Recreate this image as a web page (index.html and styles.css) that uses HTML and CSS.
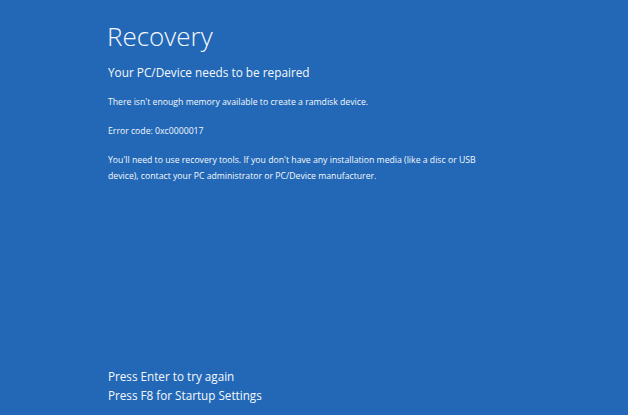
FILE: index.html
```html
<!DOCTYPE html>
<html lang="en">
<head>
    <meta charset="UTF-8">
    <meta name="viewport" content="width=device-width, initial-scale=1.0">
    <title>Recovery</title>
    <link rel="stylesheet" href="styles.css">
</head>
<body>
    <div class="screen">
        <div class="content">
            <h1 class="title">Recovery</h1>
            <h2 class="subtitle">Your PC/Device needs to be repaired</h2>
            <p class="message">There isn't enough memory available to create a ramdisk device.</p>
            <p class="message">Error code: 0xc0000017</p>
            <p class="message">You'll need to use recovery tools. If you don't have any installation media (like a disc or USB<br>device), contact your PC administrator or PC/Device manufacturer.</p>
        </div>
        <div class="actions">
            <p class="action">Press Enter to try again</p>
            <p class="action">Press F8 for Startup Settings</p>
        </div>
    </div>
</body>
</html>
```

FILE: styles.css
```css
* {
    margin: 0;
    padding: 0;
    box-sizing: border-box;
}

body {
    font-family: "Open Sans", "Noto Sans", sans-serif;
    background-color: #2368b6;
    color: #f4f8fc;
    height: 100vh;
    overflow: hidden;
}

.screen {
    display: flex;
    flex-direction: column;
    height: 100%;
    padding: 17px 0 10px 107px;
}

.title {
    font-size: 26px;
    font-weight: 300;
    line-height: 38px;
}

.subtitle {
    font-size: 11.8px;
    font-weight: 400;
    line-height: 18px;
    margin: 8px 0 13px 1px;
}

.message {
    font-size: 8.7px;
    line-height: 16px;
    margin: 0 0 13px 1px;
}

.actions {
    margin-top: auto;
    margin-left: 1px;
}

.action {
    font-size: 11.7px;
    line-height: 19px;
}
```
